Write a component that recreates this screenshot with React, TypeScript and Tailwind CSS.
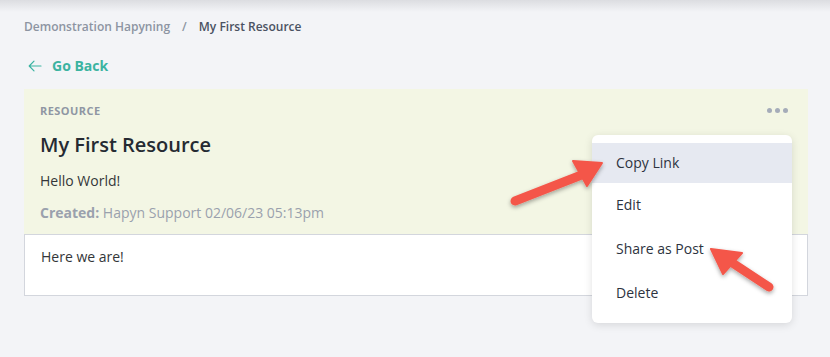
import React from "react";

const menuItems = ["Copy Link", "Edit", "Share as Post", "Delete"];

function Arrows() {
  return (
    <svg
      className="pointer-events-none absolute left-0 top-0"
      width={830}
      height={357}
      viewBox="0 0 830 357"
    >
      <defs>
        <filter id="sh" x="-20%" y="-20%" width="140%" height="140%">
          <feDropShadow dx="0" dy="2" stdDeviation="2" floodColor="#000" floodOpacity="0.35" />
        </filter>
      </defs>
      <g filter="url(#sh)" fill="#f4574a" stroke="#f4574a" strokeLinejoin="round">
        <line x1="515" y1="201" x2="584" y2="174" strokeWidth="9" strokeLinecap="round" />
        <polygon points="602,163 573,161 587,186" strokeWidth="2" />
        <line x1="769" y1="287" x2="731" y2="262" strokeWidth="9" strokeLinecap="round" />
        <polygon points="711,249 742,253 723,274" strokeWidth="2" />
      </g>
    </svg>
  );
}

export default function App() {
  return (
    <div
      className="relative h-[357px] w-[830px] overflow-hidden bg-[#f3f4f7]"
      style={{ fontFamily: '"Open Sans", sans-serif' }}
    >
      <div className="h-3 w-full bg-gradient-to-b from-[#dcdde1] to-[#f3f4f7]" />
      <div className="px-6">
        <div className="mt-[7px] flex items-center text-xs font-semibold leading-4">
          <span className="text-[#8d94a2]">Demonstration Hapyning</span>
          <span className="mx-3 text-[#8d94a2]">/</span>
          <span className="text-[#4a5262]">My First Resource</span>
        </div>
        <div className="mt-[21px] flex items-center gap-[10px] pl-1 text-sm font-bold leading-5 text-[#3bb3a1]">
          <svg width="14" height="12" viewBox="0 0 14 12" fill="none" stroke="#3bb3a1" strokeWidth="1.2" strokeLinecap="round" strokeLinejoin="round">
            <path d="M13 6H1.5M6 1.2 1.2 6 6 10.8" />
          </svg>
          <span>Go Back</span>
        </div>
        <div className="mt-[13px] w-[784px]">
          <div className="relative bg-[#f3f6e4] px-4 pb-[11px] pt-[14px]">
            <div className="text-[11px] font-bold uppercase leading-4 tracking-[0.04em] text-[#8f96a3]">
              Resource
            </div>
            <div className="mt-3 text-xl font-semibold leading-7 text-[#252a32]">My First Resource</div>
            <div className="mt-3 text-sm leading-5 text-[#333639]">Hello World!</div>
            <div className="mt-3 text-sm leading-5 text-[#9aa1ad]">
              <span className="font-bold">Created:</span> Hapyn Support 02/06/23 05:13pm
            </div>
            <div className="absolute right-[20px] top-[19px] flex gap-[3px]">
              <span className="h-[5px] w-[5px] rounded-full bg-[#a5acb9]" />
              <span className="h-[5px] w-[5px] rounded-full bg-[#a5acb9]" />
              <span className="h-[5px] w-[5px] rounded-full bg-[#a5acb9]" />
            </div>
          </div>
          <div className="h-[62px] border border-[#d3d6dd] bg-white px-4 pt-3 text-sm leading-5 text-[#333639]">
            Here we are!
          </div>
        </div>
      </div>

      <div className="absolute left-[592px] top-[135px] flex w-[200px] flex-col rounded-md bg-white pb-2 pt-2 shadow-[0_2px_8px_rgba(0,0,0,0.12)]">
        {menuItems.map((item, i) => (
          <div
            key={item}
            className={
              "flex items-center px-6 text-sm text-[#2d3340] " +
              (i === 0 ? "h-10 bg-[#e6e9f1]" : "h-11")
            }
          >
            {item}
          </div>
        ))}
      </div>

      <Arrows />
    </div>
  );
}
